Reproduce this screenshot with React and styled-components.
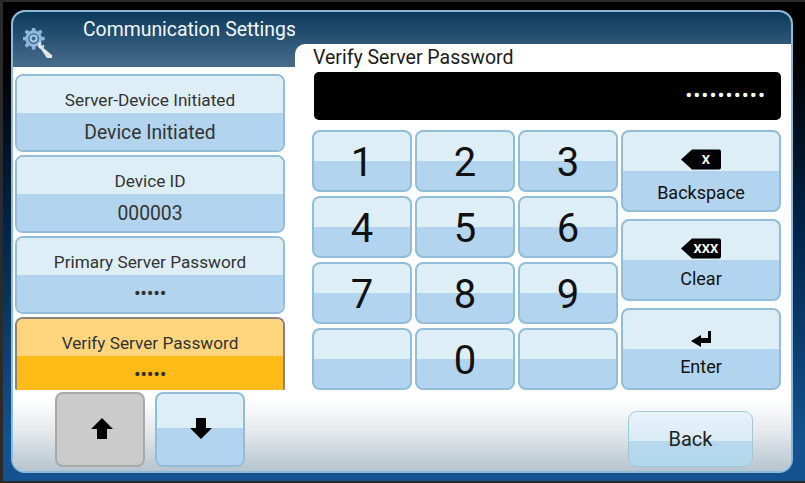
import * as React from "react";
import styled, { createGlobalStyle } from "styled-components";

const GlobalStyle = createGlobalStyle`
  html, body {
    margin: 0;
    padding: 0;
    background: #000;
  }
  * {
    box-sizing: border-box;
  }
`;

const Frame = styled.div`
  width: 805px;
  height: 483px;
  padding: 8px 12px 8px 8px;
  border-style: solid;
  border-color: #2b2b2b;
  border-width: 2px 0 2px 3px;
  background: linear-gradient(#000 0%, #000 12%, #02254c 48%, #14538f 92%);
  font-family: Roboto, "Liberation Sans", sans-serif;
  overflow: hidden;
`;

const Panel = styled.div`
  width: 782px;
  height: 463px;
  display: flex;
  flex-direction: column;
  border: 2px solid #8dbad6;
  border-radius: 14px;
  overflow: hidden;
  background: #fff;
`;

const Body = styled.div`
  height: 378px;
  display: grid;
  grid-template-columns: 282px 496px;
`;

const LeftColumn = styled.div`
  display: flex;
  flex-direction: column;
  min-height: 0;
`;

const RightColumn = styled.div`
  display: flex;
  flex-direction: column;
  min-height: 0;
  background: linear-gradient(#0c3a5c 0%, #486d8c 100%) 0 0 / 100% 55px no-repeat;
`;

const TitleBar = styled.div`
  height: 55px;
  flex: none;
  display: flex;
  align-items: flex-start;
  gap: 30px;
  padding: 7px 0 0 10px;
  background: linear-gradient(#0c3a5c 0%, #486d8c 100%);
`;

const IconWrap = styled.span`
  display: block;
  margin-top: 9px;
  line-height: 0;
`;

const Title = styled.h1`
  margin: 0;
  font-size: 19.4px;
  line-height: 22px;
  font-weight: 400;
  color: #f2f7fa;
  white-space: nowrap;
`;

const FieldList = styled.div`
  flex: 1;
  min-height: 0;
  overflow: hidden;
  display: flex;
  flex-direction: column;
  gap: 3px;
  padding: 7px 0 0 2px;
`;

const Field = styled.div`
  flex: none;
  width: 270px;
  height: 78px;
  display: flex;
  flex-direction: column;
  border: 2px solid ${(p) => (p.$active ? "#8a8477" : "#92bdd8")};
  border-bottom-width: ${(p) => (p.$active ? "0" : "2px")};
  border-radius: 8px;
  overflow: hidden;
  color: #333;
  text-align: center;
`;

const FieldLabel = styled.div`
  flex: none;
  height: 37px;
  padding-top: 14px;
  font-size: 17.2px;
  line-height: 20px;
  background: ${(p) => (p.$active ? "#ffd57e" : "#ddeef7")};
`;

const FieldValue = styled.div`
  flex: 1;
  min-height: 0;
  font-size: ${(p) => (p.$dots ? "20px" : "19.3px")};
  letter-spacing: ${(p) => (p.$dots ? "-0.3px" : "0")};
  line-height: ${(p) => (p.$dots ? "36px" : "40px")};
  background: ${(p) => (p.$active ? "#ffbb17" : "#b3d4ee")};
`;

const HeaderGap = styled.div`
  height: 32px;
  flex: none;
`;

const EntryPane = styled.div`
  flex: 1;
  min-height: 0;
  display: flex;
  flex-direction: column;
  padding-left: 17px;
  background: #fff;
  border-top-left-radius: 10px;
`;

const EntryTitle = styled.div`
  height: 28px;
  font-size: 19.5px;
  line-height: 27px;
  color: #1b1b1b;
  padding-left: 1px;
  white-space: nowrap;
`;

const Display = styled.div`
  width: 467px;
  height: 48px;
  margin-left: 2px;
  padding-right: 15px;
  background: #000;
  border-radius: 5px;
  color: #fff;
  font-size: 21px;
  letter-spacing: 1px;
  line-height: 46px;
  text-align: right;
`;

const KeyArea = styled.div`
  display: grid;
  grid-template-columns: 306px 160px;
  column-gap: 3px;
  margin-top: 10px;
`;

const Digits = styled.div`
  display: grid;
  grid-template-columns: repeat(3, 100px);
  grid-auto-rows: 62px;
  gap: 4px 3px;
`;

const Commands = styled.div`
  display: flex;
  flex-direction: column;
  gap: 7px;
`;

const KeyButton = styled.button`
  padding: 0;
  margin: 0;
  font-family: inherit;
  border: 2px solid #92bdd8;
  border-radius: 8px;
  color: #111;
  background: linear-gradient(#ddeef7 50%, #b3d4ee 50%);
`;

const DigitKey = styled(KeyButton)`
  padding-top: 3px;
  font-size: 40px;
  line-height: 54px;
  font-weight: 400;
`;

const CommandKey = styled(KeyButton)`
  height: 82px;
  display: flex;
  flex-direction: column;
  align-items: center;
  font-size: 18px;
  line-height: 22px;
  padding-top: ${(p) => p.$pad}px;
  gap: ${(p) => p.$gap}px;
`;

const IconSlot = styled.span`
  display: block;
  height: 21px;
  line-height: 0;
`;

const Footer = styled.div`
  flex: 1;
  display: flex;
  align-items: flex-start;
  padding: 2px 38px 0 42px;
  gap: 10px;
  background: linear-gradient(#fff 0%, #fff 12%, #e6eaed 50%, #b6c4ce 100%);
`;

const ArrowKey = styled.button`
  width: 90px;
  height: 75px;
  padding: 0 0 3px ${(p) => (p.$disabled ? "3px" : "1px")};
  display: flex;
  align-items: center;
  justify-content: center;
  border: 2px solid ${(p) => (p.$disabled ? "#a9a9a9" : "#92bdd8")};
  border-radius: 8px;
  background: ${(p) =>
    p.$disabled ? "#cbcbcb" : "linear-gradient(#ddeef7 48%, #b3d4ee 48%)"};
`;

const BackButton = styled.button`
  width: 125px;
  height: 56px;
  margin: 19px 0 0 auto;
  padding: 0;
  font-family: inherit;
  font-size: 20px;
  color: #222;
  border: 1px solid #a0c6dc;
  border-radius: 9px;
  background: linear-gradient(#e9f3fb 0%, #d9ebf6 54%, #b8d8ec 54%, #b2d8ec 100%);
`;

const SettingsIcon = () => (
  <svg width="30" height="30" viewBox="0 0 34 34">
    <g fill="#8db8de">
      <circle cx="12" cy="12" r="9.5" />
      {[0, 45, 90, 135, 180, 225, 270, 315].map((a) => (
        <rect key={a} x="10" y="-0.5" width="4" height="5" transform={`rotate(${a} 12 12)`} />
      ))}
    </g>
    <circle cx="12" cy="12" r="6" fill="#2f5f85" />
    <circle cx="12" cy="12" r="4.6" fill="#a9cbe8" />
    <circle cx="12" cy="12" r="2.3" fill="#3a6a90" />
    <path
      d="M17 20.5 C16.5 18 18.5 16 21 16.3 L19.6 19 L21.6 20.6 L23.8 18.8 C24.3 20.6 24 21.8 23.2 22.6 L33 31 L33 34 L27 34 L20.5 24 C19 24 17.6 22.6 17 20.5 Z"
      fill="#e2e6e8"
    />
  </svg>
);

const TagIcon = ({ text }) => (
  <svg width="41" height="21" viewBox="0 0 41 21">
    <path d="M0 10.5 L11 0.5 H38 Q40 0.5 40 2.5 V18.5 Q40 20.5 38 20.5 H11 Z" fill="#000" />
    <text
      x="25"
      y="15.2"
      fill="#fff"
      fontFamily="Roboto, sans-serif"
      fontWeight="700"
      fontSize="13"
      textAnchor="middle"
    >
      {text}
    </text>
  </svg>
);

const EnterIcon = () => (
  <svg width="20" height="16" viewBox="0 0 20 16">
    <path d="M0 10 L10 4 V7 H17 V0 H20 V12 H10 V16 Z" fill="#000" />
  </svg>
);

const UpIcon = () => (
  <svg width="22" height="21" viewBox="0 0 22 21">
    <path d="M11 0 L22 11 H16 V21 H6 V11 H0 Z" fill="#000" />
  </svg>
);

const DownIcon = () => (
  <svg width="22" height="21" viewBox="0 0 22 21">
    <path d="M11 21 L22 10 H16 V0 H6 V10 H0 Z" fill="#000" />
  </svg>
);

const fields = [
  { label: "Server-Device Initiated", value: "Device Initiated" },
  { label: "Device ID", value: "000003" },
  { label: "Primary Server Password", value: "•••••", dots: true },
  { label: "Verify Server Password", value: "•••••", dots: true, active: true },
];

const digits = ["1", "2", "3", "4", "5", "6", "7", "8", "9", "", "0", ""];

const App = () => (
  <Frame>
    <GlobalStyle />
    <Panel>
      <Body>
        <LeftColumn>
          <TitleBar>
            <IconWrap>
              <SettingsIcon />
            </IconWrap>
            <Title>Communication Settings</Title>
          </TitleBar>
          <FieldList>
            {fields.map((field) => (
              <Field key={field.label} $active={field.active}>
                <FieldLabel $active={field.active}>{field.label}</FieldLabel>
                <FieldValue $active={field.active} $dots={field.dots}>
                  {field.value}
                </FieldValue>
              </Field>
            ))}
          </FieldList>
        </LeftColumn>
        <RightColumn>
          <HeaderGap />
          <EntryPane>
            <EntryTitle>Verify Server Password</EntryTitle>
            <Display>••••••••••</Display>
            <KeyArea>
              <Digits>
                {digits.map((digit, i) => (
                  <DigitKey key={i}>{digit}</DigitKey>
                ))}
              </Digits>
              <Commands>
                <CommandKey $pad={17} $gap={12}>
                  <IconSlot>
                    <TagIcon text="X" />
                  </IconSlot>
                  Backspace
                </CommandKey>
                <CommandKey $pad={17} $gap={9}>
                  <IconSlot>
                    <TagIcon text="XXX" />
                  </IconSlot>
                  Clear
                </CommandKey>
                <CommandKey $pad={21} $gap={4}>
                  <IconSlot>
                    <EnterIcon />
                  </IconSlot>
                  Enter
                </CommandKey>
              </Commands>
            </KeyArea>
          </EntryPane>
        </RightColumn>
      </Body>
      <Footer>
        <ArrowKey $disabled>
          <UpIcon />
        </ArrowKey>
        <ArrowKey>
          <DownIcon />
        </ArrowKey>
        <BackButton>Back</BackButton>
      </Footer>
    </Panel>
  </Frame>
);

export default App;
